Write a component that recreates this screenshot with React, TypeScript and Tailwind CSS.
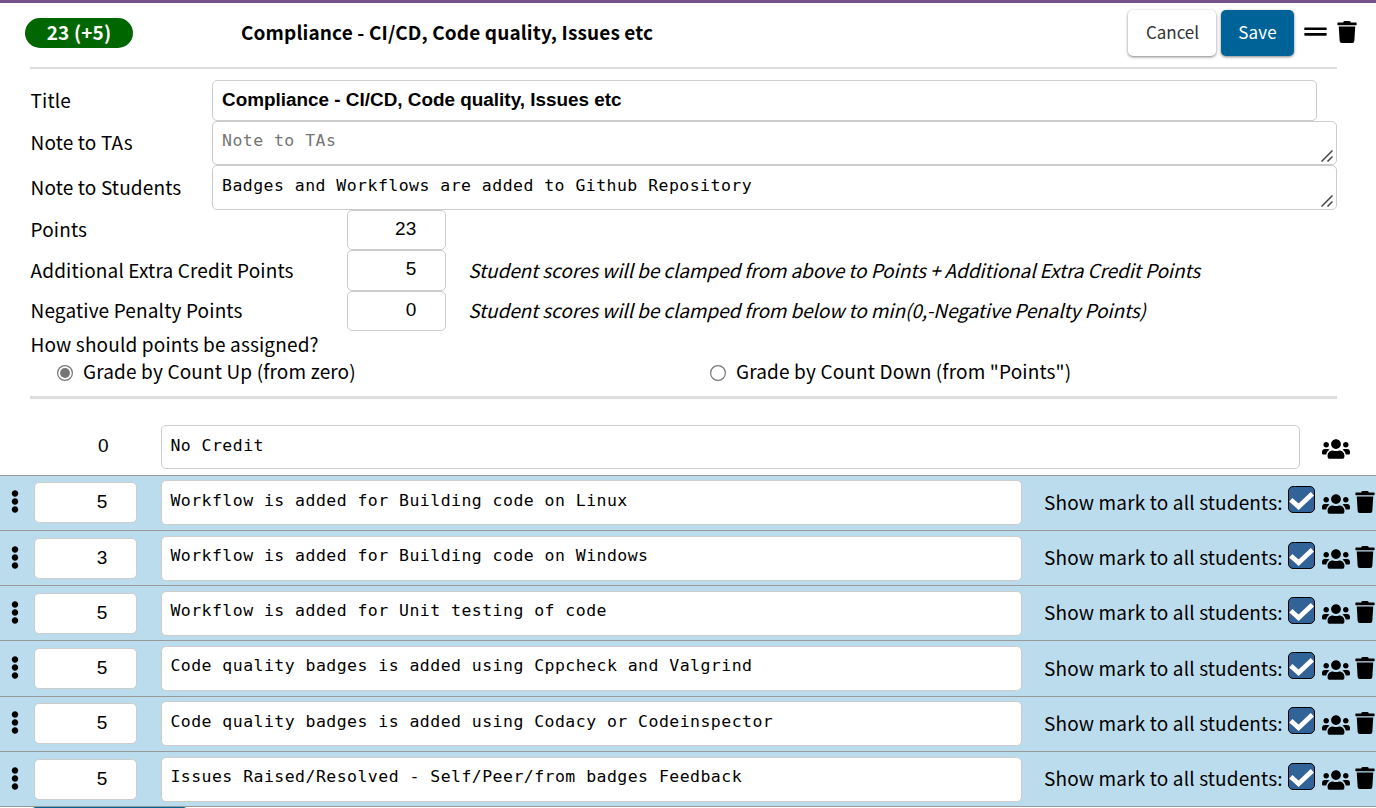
import { FaUsers, FaTrash, FaEllipsisV } from "react-icons/fa";

const marks = [
  { points: 5, text: "Workflow is added for Building code on Linux" },
  { points: 3, text: "Workflow is added for Building code on Windows" },
  { points: 5, text: "Workflow is added for Unit testing of code" },
  { points: 5, text: "Code quality badges is added using Cppcheck and Valgrind" },
  { points: 5, text: "Code quality badges is added using Codacy or Codeinspector" },
  { points: 5, text: "Issues Raised/Resolved - Self/Peer/from badges Feedback" },
];

const mono = "font-['DejaVu_Sans_Mono',monospace] text-[16.5px] tracking-[0.46px] leading-[24px] whitespace-pre";
const field = "rounded-[5px] border border-[#ccc] bg-white";
const num = "font-['Liberation_Sans',sans-serif] text-[19px] leading-[24px] text-right";

function Note({ text, muted, tall }: { text: string; muted?: boolean; tall?: boolean }) {
  return (
    <div className={`${field} relative w-[1125px] pl-[9px] ${tall ? "h-[45px] pt-[8px]" : "h-[44px] pt-[7px]"}`}>
      <div className={`${mono} ${muted ? "text-[#757575]" : ""}`}>{text}</div>
      <svg className="absolute right-[3px] bottom-[2px]" width="12" height="12" viewBox="0 0 12 12">
        <path d="M0.5 11.5 L11.5 0.5 M6.5 11.5 L11.5 6.5" stroke="#444" strokeWidth="1.5" />
      </svg>
    </div>
  );
}

function PointRow({ label, value, hint, height }: { label: string; value: string; hint?: string; height: string }) {
  return (
    <div className={`flex items-center ${height}`}>
      <div className="w-[317px] pb-[2px] pl-[0.5px]">{label}</div>
      <div className={`${field} ${num} h-full w-[99px] pt-[6.4px] pr-[28.5px]`}>{value}</div>
      {hint && <div className="ml-[22.3px] pb-[2px] italic tracking-[-0.1px]">{hint}</div>}
    </div>
  );
}

function Radio({ label, checked }: { label: string; checked?: boolean }) {
  return (
    <div className="flex h-[27px] w-[653px] shrink-0 items-start">
      <svg width="16" height="16" viewBox="0 0 16 16" className="mt-[7px] mr-[10px]">
        <circle cx="8" cy="8" r="7.4" fill="white" stroke="#767676" strokeWidth="1.2" />
        {checked && <circle cx="8" cy="8" r="4.9" fill="#767676" />}
      </svg>
      {label}
    </div>
  );
}

function CheckBox() {
  return (
    <div className="flex size-[27px] items-center justify-center rounded-[5px] border border-black bg-[#316399]">
      <svg width="25" height="25" viewBox="0 0 25 25">
        <path d="M1.8 12.8 L9.6 19.8 L23.4 6.8" fill="none" stroke="white" strokeWidth="4.8" />
      </svg>
    </div>
  );
}

export default function App() {
  return (
    <div className="h-[808px] w-[1376px] overflow-hidden border-t-[3px] border-[#75528b] bg-white font-['Noto_Sans_CJK_SC',sans-serif] text-[19px] leading-[26px] tracking-[0.15px] whitespace-nowrap text-black">
      <div className="flex h-[64px] items-start pt-[7px]">
        <div className="mt-[8px] ml-[25px] h-[30px] w-[108px] rounded-[15px] bg-[#006600] text-center leading-[28px] font-bold text-white">23 (+5)</div>
        <div className="mt-[9px] ml-[108px] w-[887px] font-bold tracking-[0.13px]">Compliance - CI/CD, Code quality, Issues etc</div>
        <div className="flex h-[46px] w-[88px] items-center justify-center rounded-[5px] bg-white pb-[2px] pl-[1px] text-[17px] tracking-[-0.05px] text-[#333] shadow-[0_1px_3px_rgba(0,0,0,0.5)]">Cancel</div>
        <div className="ml-[5px] flex h-[46px] w-[73px] items-center justify-center rounded-[5px] bg-[#006398] pb-[2px] text-[17px] text-white shadow-[0_1px_3px_rgba(0,0,0,0.5)]">Save</div>
        <svg className="mt-[17px] ml-[10px]" width="23" height="10" viewBox="0 0 23 10">
          <rect x="0.3" y="0.4" width="22.4" height="2.6" rx="0.6" />
          <rect x="0.3" y="6.1" width="22.4" height="2.6" rx="0.6" />
        </svg>
        <FaTrash className="mt-[11px] ml-[8.8px]" size={22} />
      </div>

      <div className="ml-[30px] w-[1307px] border-t-2 border-[#ddd] pt-[11px]">
        <div className="flex h-[41px] items-center">
          <div className="w-[182px] pb-[2px] pl-[0.5px]">Title</div>
          <div className={`${field} h-[41px] w-[1105px] pt-[6.5px] pl-[9px] font-['Liberation_Sans',sans-serif] text-[18.9px] leading-[24px] font-bold tracking-[0px]`}>Compliance - CI/CD, Code quality, Issues etc</div>
        </div>
        <div className="flex h-[44px] items-center">
          <div className="w-[182px] pb-[2px] pl-[0.5px]">Note to TAs</div>
          <Note text="Note to TAs" muted />
        </div>
        <div className="flex h-[45px] items-center">
          <div className="w-[182px] pb-[2px] pl-[0.5px]">Note to Students</div>
          <Note text="Badges and Workflows are added to Github Repository" tall />
        </div>
        <PointRow label="Points" value="23" height="h-[40px]" />
        <PointRow label="Additional Extra Credit Points" value="5" height="h-[41px]" hint="Student scores will be clamped from above to Points + Additional Extra Credit Points" />
        <PointRow label="Negative Penalty Points" value="0" height="h-[40px]" hint="Student scores will be clamped from below to min(0,-Negative Penalty Points)" />
        <div className="h-[27px] pl-[0.5px]">How should points be assigned?</div>
        <div className="flex h-[38px] pl-[27px]">
          <Radio label="Grade by Count Up (from zero)" checked />
          <Radio label={'Grade by Count Down (from "Points")'} />
        </div>
        <div className="h-[3px] bg-[#ddd]" />
      </div>

      <div className="flex h-[75.6px] pt-[26px]">
        <div className={`${num} w-[108.6px] pt-[9.4px]`}>0</div>
        <div className={`${field} ${mono} ml-[52.4px] h-[44px] w-[1139px] pt-[7.6px] pl-[8.4px]`}>No Credit</div>
        <FaUsers className="mt-[10px] ml-[22.4px]" size={28} />
      </div>

      {marks.map((m) => (
        <div key={m.text} className="flex h-[55.26px] border-t border-[#999] bg-[#bbdcec]">
          <FaEllipsisV className="mt-[14.7px] ml-[3px] w-[24px] shrink-0" size={23} />
          <div className={`${field} ${num} mt-[6.88px] ml-[7px] h-[41px] w-[103px] shrink-0 pt-[7px] pr-[28.5px]`}>{m.points}</div>
          <div className={`${field} ${mono} mt-[4.88px] ml-[24px] h-[45px] w-[861px] shrink-0 pt-[7.2px] pl-[8.4px]`}>{m.text}</div>
          <div className="mt-[13.4px] ml-[22px] w-[244px] shrink-0">Show mark to all students:</div>
          <div className="mt-[10.88px] shrink-0"><CheckBox /></div>
          <FaUsers className="mt-[14.4px] ml-[7.4px] shrink-0" size={28} />
          <FaTrash className="mt-[15.3px] ml-[3.9px] shrink-0" size={22} />
        </div>
      ))}
      <div className="border-t border-[#999]">
        <div className="ml-[32px] h-[46px] w-[155px] rounded-[4px] bg-[#006398]" />
      </div>
    </div>
  );
}
